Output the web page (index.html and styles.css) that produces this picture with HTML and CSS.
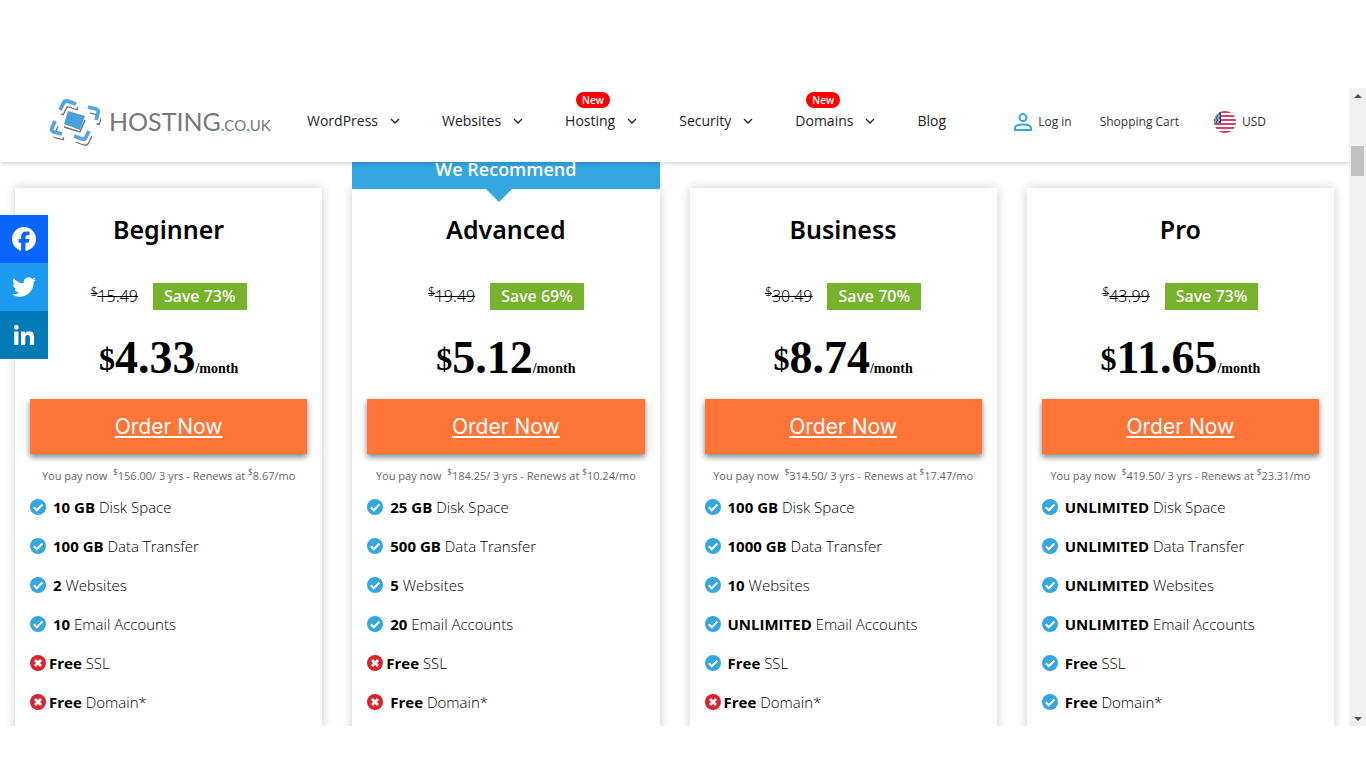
FILE: index.html
```html
<!DOCTYPE html>
<html lang="en">
<head>
  <meta charset="utf-8">
  <meta name="viewport" content="width=device-width, initial-scale=1">
  <title>Web Hosting Plans - Hosting.co.uk</title>
  <link rel="stylesheet" href="styles.css">
</head>
<body>
  <!-- shared icons -->
  <svg class="sprite" aria-hidden="true">
    <symbol id="chevron" viewBox="0 0 10 6">
      <path d="M1 1l4 4 4-4" fill="none" stroke="#212529" stroke-width="1.4"/>
    </symbol>
    <symbol id="yes" viewBox="0 0 16 16">
      <circle cx="8" cy="8" r="8" fill="#34a6e0"/>
      <path d="M3.8 8.2l3 3 5.6-5.6" fill="none" stroke="#fff" stroke-width="2.1"/>
    </symbol>
    <symbol id="no" viewBox="0 0 16 16">
      <circle cx="8" cy="8" r="8" fill="#d9232e"/>
      <path d="M5 5l6 6M11 5l-6 6" fill="none" stroke="#fff" stroke-width="2.8"/>
    </symbol>
  </svg>

  <div class="screen">
    <div class="page">
      <header class="header">
        <a class="logo" href="#">
          <svg class="logo-mark" viewBox="0 0 52 48" aria-hidden="true">
            <defs>
              <g id="frame">
                <path d="M11 11l3-6q1-3 4-3l9 3"/>
                <path d="M39 8l8 2q3 1 2 4l-2 7"/>
                <path d="M6 22l-3 7q-1 3 2 4l8 2"/>
                <path d="M25 37l8 3q3 1 4-2l3-6"/>
              </g>
            </defs>
            <use href="#frame" x="2" y="5" fill="none" stroke="#6f6f6f" stroke-width="3.2"/>
            <use href="#frame" x="1" y="3" fill="none" stroke="#fff" stroke-width="4.2"/>
            <use href="#frame" fill="none" stroke="#52a6e2" stroke-width="3.8"/>
            <path d="M15 28l16 5 5-12" fill="none" stroke="#6f6f6f" stroke-width="1.4"/>
            <path d="M19 12l17 5-5 14-16-6z" fill="#4a9fdd"/>
          </svg>
          <span class="logo-text">HOSTING<small><i>.</i>CO<i>.</i>UK</small></span>
        </a>
        <nav class="menu">
          <a href="#">WordPress<svg class="chevron"><use href="#chevron"/></svg></a>
          <a href="#">Websites<svg class="chevron"><use href="#chevron"/></svg></a>
          <a href="#">Hosting<svg class="chevron"><use href="#chevron"/></svg><span class="new">New</span></a>
          <a href="#">Security<svg class="chevron"><use href="#chevron"/></svg></a>
          <a href="#">Domains<svg class="chevron"><use href="#chevron"/></svg><span class="new">New</span></a>
          <a href="#">Blog</a>
        </nav>
        <div class="account">
          <a class="login" href="#">
            <svg width="18" height="18" viewBox="0 0 18 18" aria-hidden="true">
              <g fill="none" stroke="#34a6e0" stroke-width="2">
                <circle cx="9" cy="4.6" r="3.5"/>
                <path d="M1 17v-2c0-2.400 4-3.600 8-3.600s8 1.200 8 3.600v2z"/>
              </g>
            </svg>
            Log in
          </a>
          <a href="#">Shopping Cart</a>
          <a class="currency" href="#">
            <svg width="22" height="22" viewBox="0 0 22 22" aria-hidden="true">
              <clipPath id="round"><circle cx="11" cy="11" r="11"/></clipPath>
              <g clip-path="url(#round)">
                <path d="M0 0h22v22H0z" fill="#fff"/>
                <path d="M0 1h22M0 5h22M0 9h22M0 13h22M0 17h22M0 21h22" stroke="#d5406a" stroke-width="2"/>
                <path d="M0 0h7v12H0z" fill="#2a4a7d"/>
                <path d="M0 3h6M1 5h5M0 7h6M1 9h5M0 11h6" stroke="#fff" stroke-width="1" stroke-dasharray="2 1"/>
              </g>
            </svg>
            USD
          </a>
        </div>
      </header>

      <main class="plans">
        <section class="plan">
          <h2>Beginner</h2>
          <div class="offer"><del><sup>$</sup>15.49</del><span class="save">Save 73%</span></div>
          <div class="price"><span class="sign">$</span>4.33<span class="per">/month</span></div>
          <a class="order" href="#">Order Now</a>
          <p class="terms">You pay now &nbsp;<sup>$</sup>156.00/ 3 yrs - Renews at <sup>$</sup>8.67/mo</p>
          <ul class="features">
            <li><svg><use href="#yes"/></svg><span><b>10 GB</b> Disk Space</span></li>
            <li><svg><use href="#yes"/></svg><span><b>100 GB</b> Data Transfer</span></li>
            <li><svg><use href="#yes"/></svg><span><b>2</b> Websites</span></li>
            <li><svg><use href="#yes"/></svg><span><b>10</b> Email Accounts</span></li>
            <li class="tight"><svg><use href="#no"/></svg><span><b>Free</b> SSL</span></li>
            <li class="tight"><svg><use href="#no"/></svg><span><b>Free</b> Domain*</span></li>
          </ul>
        </section>

        <section class="plan">
          <div class="recommend">We Recommend</div>
          <h2>Advanced</h2>
          <div class="offer"><del><sup>$</sup>19.49</del><span class="save">Save 69%</span></div>
          <div class="price"><span class="sign">$</span>5.12<span class="per">/month</span></div>
          <a class="order" href="#">Order Now</a>
          <p class="terms">You pay now &nbsp;<sup>$</sup>184.25/ 3 yrs - Renews at <sup>$</sup>10.24/mo</p>
          <ul class="features">
            <li><svg><use href="#yes"/></svg><span><b>25 GB</b> Disk Space</span></li>
            <li><svg><use href="#yes"/></svg><span><b>500 GB</b> Data Transfer</span></li>
            <li><svg><use href="#yes"/></svg><span><b>5</b> Websites</span></li>
            <li><svg><use href="#yes"/></svg><span><b>20</b> Email Accounts</span></li>
            <li class="tight"><svg><use href="#no"/></svg><span><b>Free</b> SSL</span></li>
            <li><svg><use href="#no"/></svg><span><b>Free</b> Domain*</span></li>
          </ul>
        </section>

        <section class="plan">
          <h2>Business</h2>
          <div class="offer"><del><sup>$</sup>30.49</del><span class="save">Save 70%</span></div>
          <div class="price"><span class="sign">$</span>8.74<span class="per">/month</span></div>
          <a class="order" href="#">Order Now</a>
          <p class="terms">You pay now &nbsp;<sup>$</sup>314.50/ 3 yrs - Renews at <sup>$</sup>17.47/mo</p>
          <ul class="features">
            <li><svg><use href="#yes"/></svg><span><b>100 GB</b> Disk Space</span></li>
            <li><svg><use href="#yes"/></svg><span><b>1000 GB</b> Data Transfer</span></li>
            <li><svg><use href="#yes"/></svg><span><b>10</b> Websites</span></li>
            <li><svg><use href="#yes"/></svg><span><b>UNLIMITED</b> Email Accounts</span></li>
            <li><svg><use href="#yes"/></svg><span><b>Free</b> SSL</span></li>
            <li class="tight"><svg><use href="#no"/></svg><span><b>Free</b> Domain*</span></li>
          </ul>
        </section>

        <section class="plan">
          <h2>Pro</h2>
          <div class="offer"><del><sup>$</sup>43.99</del><span class="save">Save 73%</span></div>
          <div class="price"><span class="sign">$</span>11.65<span class="per">/month</span></div>
          <a class="order" href="#">Order Now</a>
          <p class="terms">You pay now &nbsp;<sup>$</sup>419.50/ 3 yrs - Renews at <sup>$</sup>23.31/mo</p>
          <ul class="features">
            <li><svg><use href="#yes"/></svg><span><b>UNLIMITED</b> Disk Space</span></li>
            <li><svg><use href="#yes"/></svg><span><b>UNLIMITED</b> Data Transfer</span></li>
            <li><svg><use href="#yes"/></svg><span><b>UNLIMITED</b> Websites</span></li>
            <li><svg><use href="#yes"/></svg><span><b>UNLIMITED</b> Email Accounts</span></li>
            <li><svg><use href="#yes"/></svg><span><b>Free</b> SSL</span></li>
            <li><svg><use href="#yes"/></svg><span><b>Free</b> Domain*</span></li>
          </ul>
        </section>
      </main>

      <div class="social">
        <a class="facebook" href="#" aria-label="Facebook">
          <svg viewBox="0 0 32 32"><path fill="#fff" d="M28 16c0-6.627-5.373-12-12-12S4 9.373 4 16c0 5.628 3.875 10.350 9.101 11.647v-7.980h-2.474V16H13.100v-1.580c0-4.085 1.849-5.978 5.859-5.978.76 0 2.072.15 2.608.298v3.325c-.283-.03-.775-.045-1.386-.045-1.967 0-2.728.745-2.728 2.683V16h3.920l-.673 3.667h-3.247v8.245C23.395 27.195 28 22.135 28 16"/></svg>
        </a>
        <a class="twitter" href="#" aria-label="Twitter">
          <svg viewBox="0 0 32 32"><path fill="#fff" d="M28 8.557a10 10 0 0 1-2.828.775 4.930 4.930 0 0 0 2.166-2.725 9.700 9.700 0 0 1-3.130 1.194 4.920 4.920 0 0 0-3.593-1.550 4.924 4.924 0 0 0-4.794 6.049c-4.090-.21-7.720-2.170-10.150-5.150a4.940 4.940 0 0 0-.665 2.477c0 1.710.870 3.214 2.190 4.100a5 5 0 0 1-2.230-.616v.060c0 2.390 1.700 4.380 3.952 4.830-.414.115-.850.174-1.297.174q-.476-.001-.928-.086a4.935 4.935 0 0 0 4.600 3.420 9.900 9.900 0 0 1-6.114 2.107q-.597 0-1.175-.068a13.950 13.950 0 0 0 7.550 2.213c9.056 0 14.010-7.507 14.010-14.013q0-.32-.015-.637c.960-.695 1.795-1.560 2.455-2.550z"/></svg>
        </a>
        <a class="linkedin" href="#" aria-label="LinkedIn">
          <svg viewBox="0 0 32 32"><path fill="#fff" d="M6.227 12.610h4.190v13.480h-4.190zm2.095-6.700a2.430 2.430 0 0 1 0 4.860c-1.344 0-2.428-1.090-2.428-2.430s1.084-2.430 2.428-2.430m4.720 6.700h4.020v1.840h.058c.560-1.058 1.927-2.176 3.965-2.176 4.238 0 5.020 2.792 5.020 6.420v7.395h-4.183v-6.560c0-1.564-.03-3.574-2.178-3.574-2.180 0-2.514 1.700-2.514 3.460v6.668h-4.187z"/></svg>
        </a>
      </div>
    </div>

    <div class="scrollbar" aria-hidden="true">
      <svg viewBox="0 0 8 4"><path d="M0 4l4-4 4 4z" fill="#505050"/></svg>
      <div class="thumb"></div>
      <svg viewBox="0 0 8 4"><path d="M0 0l4 4 4-4z" fill="#505050"/></svg>
    </div>
  </div>
</body>
</html>
```
FILE: styles.css
```css
* {
  box-sizing: border-box;
}

body {
  margin: 0;
  height: 100vh;
  padding: 88px 0 42px;
  display: flex;
  background: #fff;
  color: #000;
  font-family: "Open Sans", sans-serif;
  font-size: 15px;
}

a {
  color: inherit;
  text-decoration: none;
}

.sprite {
  display: none;
}

.screen {
  flex: 1;
  display: flex;
  overflow: hidden;
}

.page {
  position: relative;
  flex: 1;
  overflow: hidden;
}

/* header */
.header {
  position: relative;
  z-index: 5;
  height: 74px;
  padding-left: 49px;
  display: flex;
  align-items: center;
  background: #fff;
  box-shadow: 0 1px 5px rgba(0, 0, 0, 0.2);
}

.logo {
  display: flex;
  align-items: center;
  gap: 8px;
  width: 258px;
  padding-bottom: 4px;
}

.logo-mark {
  width: 52px;
  height: 48px;
}

.logo-text {
  font-family: Lato, sans-serif;
  font-size: 25px;
  line-height: 30px;
  color: #777;
}

.logo-text small {
  font-size: 15px;
}

.logo-text i {
  color: #52a6e2;
  font-style: normal;
  font-weight: 900;
}

.menu {
  display: flex;
  gap: 42px;
  padding-bottom: 8px;
  font-size: 14px;
  line-height: 20px;
  color: #212529;
}

.menu a {
  position: relative;
  display: flex;
  align-items: center;
  gap: 12px;
}

.chevron {
  width: 10px;
  height: 6px;
}

.new {
  position: absolute;
  top: -19px;
  left: 11px;
  padding: 0 6px;
  border-radius: 8px;
  background: #f00;
  color: #fff;
  font-size: 10px;
  font-weight: 600;
  line-height: 16px;
}

.account {
  margin-left: auto;
  margin-right: 83px;
  display: flex;
  align-items: center;
  padding-bottom: 6px;
  font-size: 12px;
  line-height: 20px;
  color: #333;
}

.login,
.currency {
  display: flex;
  align-items: center;
  gap: 6px;
}

.login {
  margin-right: 28px;
}

.currency {
  margin-left: 35px;
}

/* plans */
.plans {
  display: grid;
  grid-template-columns: repeat(4, 1fr);
  gap: 30px;
  padding: 26px 15px;
}

.plan {
  position: relative;
  padding: 23px 15px 40px;
  background: #fff;
  box-shadow: 0 0 10px rgba(0, 0, 0, 0.2);
  text-align: center;
}

.recommend {
  position: absolute;
  left: 0;
  right: 0;
  top: -39px;
  background: #34a6e0;
  color: #fff;
  font-size: 18px;
  font-weight: 600;
  line-height: 40px;
}

.recommend::after {
  content: "";
  position: absolute;
  top: 100%;
  left: 50%;
  margin-left: -20px;
  border: 13px solid transparent;
  border-top-color: #34a6e0;
  border-bottom: 0;
}

.plan h2 {
  margin: 0;
  font-family: "Noto Sans", sans-serif;
  font-size: 25px;
  font-weight: 600;
  line-height: 36px;
}

.offer {
  display: flex;
  justify-content: center;
  align-items: center;
  gap: 15px;
  margin-top: 36px;
  font-family: "Noto Sans", sans-serif;
  font-size: 16px;
  line-height: 27px;
}

.offer del {
  font-weight: 300;
}

sup {
  font-size: 75%;
  line-height: 0;
}

.save {
  padding: 0 11px;
  background: #76b22c;
  color: #fff;
  font-weight: 500;
}

.price {
  height: 56px;
  margin-top: 20px;
  font-family: "Liberation Serif", serif;
  font-size: 46px;
  font-weight: bold;
  line-height: 56px;
}

.price .sign {
  font-size: 32px;
  vertical-align: 3px;
}

.price .per {
  font-size: 14px;
}

.order {
  display: block;
  margin-top: 13px;
  background: #ff7437;
  box-shadow: 0 3px 6px rgba(0, 0, 0, 0.5);
  color: #fff;
  font-family: Inter, sans-serif;
  font-size: 21px;
  line-height: 55px;
  text-decoration: underline;
}

.terms {
  margin: 12px 0 0;
  color: #666;
  font-size: 11px;
  line-height: 20px;
}

.features {
  display: grid;
  gap: 15px;
  margin: 9px 0 0;
  padding: 0;
  list-style: none;
  font-weight: 350;
  line-height: 24px;
  text-align: left;
}

.features li {
  display: flex;
  align-items: center;
  gap: 7px;
}

.features .tight {
  gap: 3px;
}

.features svg {
  width: 16px;
  height: 16px;
}

.features b {
  font-weight: 700;
}

/* share buttons */
.social {
  position: absolute;
  top: 127px;
  left: 0;
  z-index: 4;
}

.social a {
  display: block;
  width: 48px;
  height: 48px;
  padding: 8px;
}

.social svg {
  display: block;
}

.facebook {
  background: #0866ff;
}

.twitter {
  background: #1d9bf0;
}

.linkedin {
  background: #007bb5;
}

/* scrollbar */
.scrollbar {
  width: 17px;
  padding: 6px 0 5px;
  display: flex;
  flex-direction: column;
  align-items: center;
  background: #f1f1f1;
}

.scrollbar svg {
  width: 8px;
  height: 4px;
}

.thumb {
  width: 13px;
  height: 30px;
  margin: 48px 0 auto;
  background: #c1c1c1;
}
```
